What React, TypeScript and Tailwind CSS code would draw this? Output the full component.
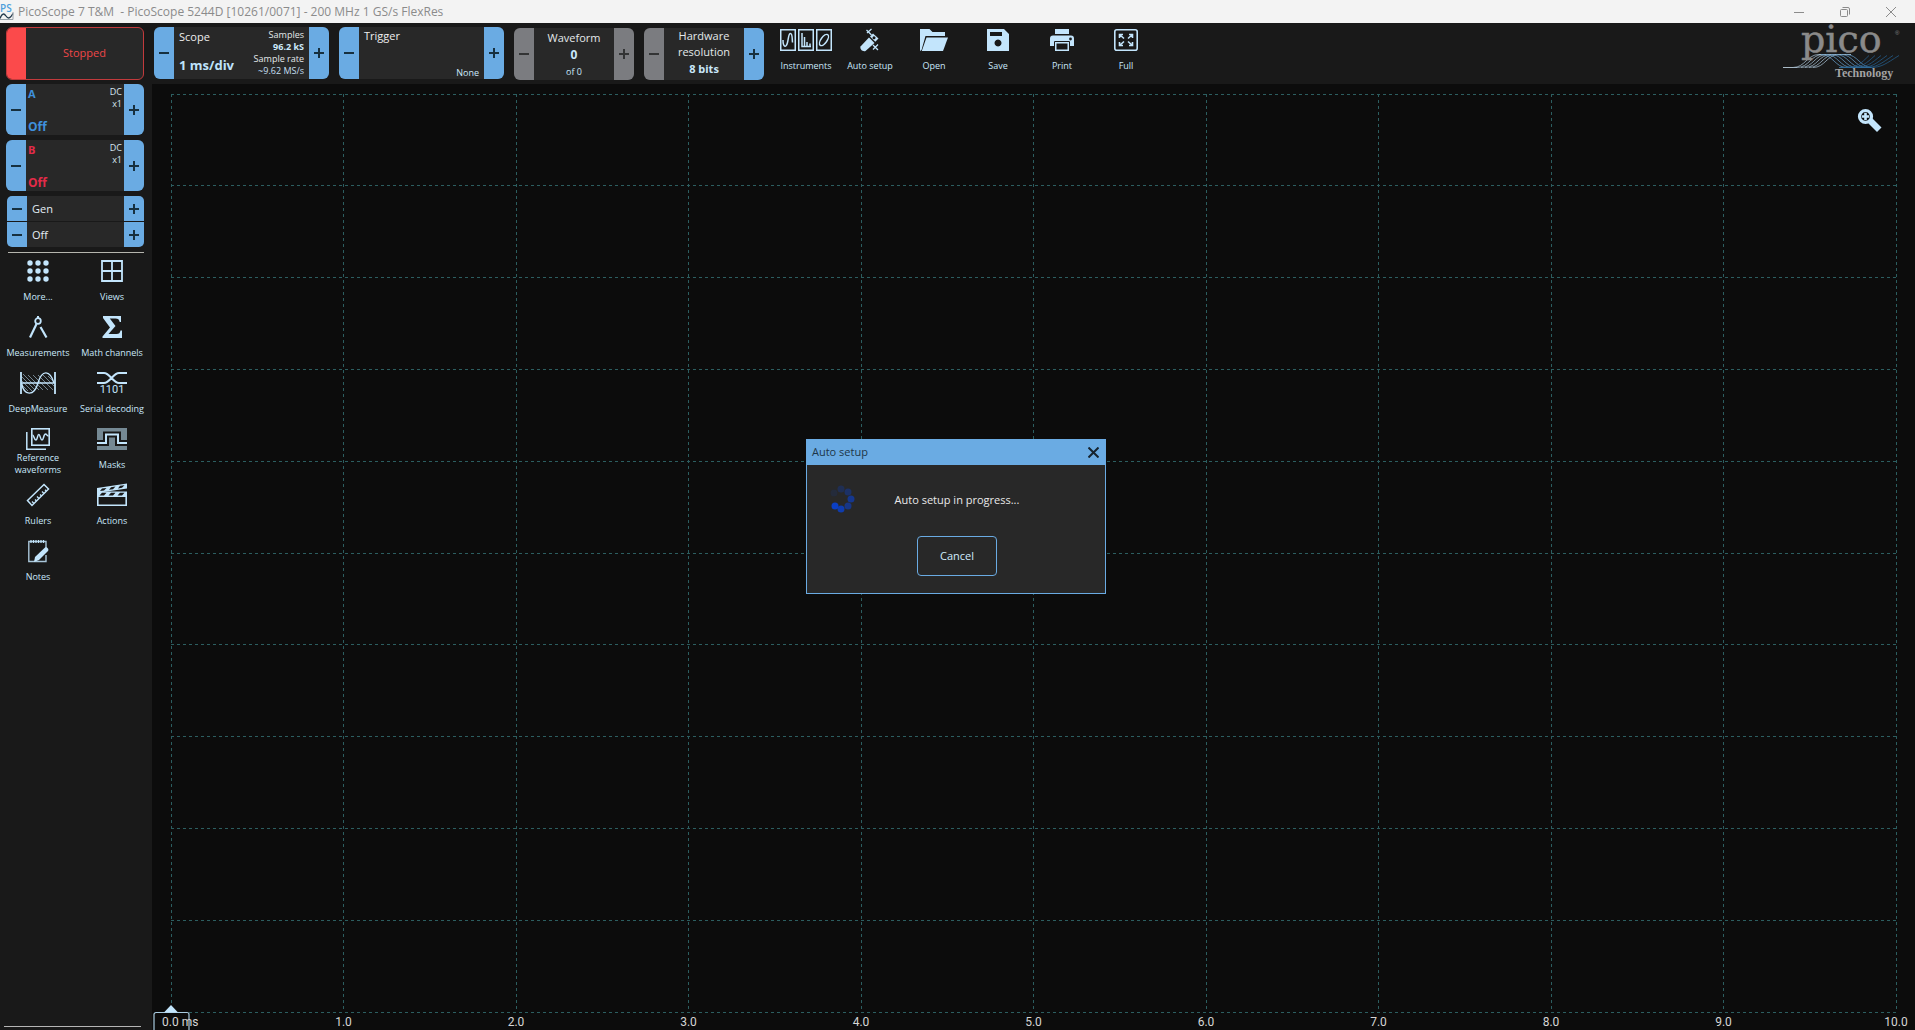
import React from "react";

type Tone = "blue" | "gray";
const ICON = "#c3e5fc";

function Minus() {
  return (
    <svg width="12" height="12" viewBox="0 0 12 12" aria-hidden="true">
      <path d="M1 6h10" stroke="currentColor" strokeWidth="2" />
    </svg>
  );
}

function Plus() {
  return (
    <svg width="12" height="12" viewBox="0 0 12 12" aria-hidden="true">
      <path d="M1 6h10M6 1v10" stroke="currentColor" strokeWidth="2" />
    </svg>
  );
}

function Step({ kind, label, tone = "blue" }: { kind: "minus" | "plus"; label: string; tone?: Tone }) {
  return (
    <button
      type="button"
      aria-label={label}
      className={
        "flex w-5 shrink-0 items-center justify-center self-stretch " +
        (tone === "blue" ? "bg-[#6aabe3] text-[#17303f]" : "bg-[#7b7c80] text-[#333435]")
      }
    >
      {kind === "minus" ? <Minus /> : <Plus />}
    </button>
  );
}

function Panel({
  name,
  className,
  minus = "blue",
  plus = "blue",
  children,
}: {
  name: string;
  className: string;
  minus?: Tone;
  plus?: Tone;
  children: React.ReactNode;
}) {
  return (
    <div className={"flex overflow-hidden rounded-md bg-[#282828] " + className}>
      <Step kind="minus" label={`${name} down`} tone={minus} />
      <button type="button" className="min-w-0 flex-1">
        {children}
      </button>
      <Step kind="plus" label={`${name} up`} tone={plus} />
    </div>
  );
}

/* ---------- icons ---------- */

function AppIcon() {
  return (
    <svg className="overflow-visible" width="14" height="18" viewBox="0 0 14 18" aria-hidden="true">
      <text x="0" y="9" fontSize="10" fontFamily="Open Sans, sans-serif" fontWeight="600" fill="#4d9fdc">PS</text>
      <path d="M0 15.500C2 10 4 10 6 13s4 3 7-2.500" fill="none" stroke="#22384a" strokeWidth="1.300" />
      <path d="M0 16.500h13V9" fill="none" stroke="#9aa3aa" strokeWidth="1" />
    </svg>
  );
}

function InstrumentsIcon() {
  return (
    <svg width="52" height="24" viewBox="0 0 52 24" fill="none" stroke={ICON} strokeWidth="1.500">
      <rect x=".75" y="1.750" width="14.500" height="20.500" />
      <rect x="18.750" y="1.750" width="14.500" height="20.500" />
      <rect x="36.750" y="1.750" width="14.500" height="20.500" />
      <path d="M3 12c0 7 3 8.500 4.500 2.500C8.800 9 8.500 5.500 10.500 5.500c2 0 1.500 4 2 9" />
      <path d="M22 5v13.500h9M24.500 18v-9M27 18v-4M30 18.500v-3" />
      <ellipse cx="44" cy="12" rx="3" ry="6.500" transform="rotate(35 44 12)" />
    </svg>
  );
}

function AutoSetupIcon() {
  return (
    <svg width="24" height="24" viewBox="0 0 24 24">
      <path d="M2.500 18.500 11 9.500l5.500 5.500-9 8c-2.500 1-6-1.500-5-4.500z" fill={ICON} />
      <path d="M12 8.500 15 5.500l5.500 5-3.200 3.300z" fill={ICON} />
      <circle cx="16" cy="9.700" r="1.500" fill="#191919" />
      <path d="M8.500 2l5 5M13.500 1l-4.500 4M15 17l5 5M20 16.500l-5 5" stroke={ICON} strokeWidth="1.300" />
    </svg>
  );
}

function OpenIcon() {
  return (
    <svg width="28" height="24" viewBox="0 0 28 24">
      <path d="M0 23V1h9.500l3 3H25v4H5.500L1.500 22z" fill={ICON} />
      <path d="M6.500 9.500H28L23 23H1.800z" fill={ICON} />
    </svg>
  );
}

function SaveIcon() {
  return (
    <svg width="24" height="24" viewBox="0 0 24 24">
      <path fillRule="evenodd" fill={ICON} d="M1 1h17l5 5v17H1zM4 4v4h12V4zM12 11.500a3.500 3.500 0 1 0 .01 0z" />
    </svg>
  );
}

function PrintIcon() {
  return (
    <svg width="26" height="24" viewBox="0 0 26 24">
      <path d="M6 1h14v5H6z" fill={ICON} />
      <path d="M4 7.500h18a3 3 0 0 1 3 3V18H1v-7.500a3 3 0 0 1 3-3z" fill={ICON} />
      <circle cx="21.500" cy="11" r="1.400" fill="#191919" />
      <rect x="6.750" y="14.750" width="12.500" height="7.500" fill="#191919" stroke={ICON} strokeWidth="1.500" />
      <path d="M5.500 13.500h15V18M5.500 13.500V18" fill="none" stroke="#191919" strokeWidth="1" />
    </svg>
  );
}

function FullIcon() {
  return (
    <svg width="24" height="24" viewBox="0 0 24 24" fill="none" stroke={ICON} strokeWidth="1.600">
      <rect x=".8" y="1.800" width="22.400" height="20.400" rx="2" />
      <path d="M5.500 10V6.500H9M5.500 6.500l4.500 4M15 6.500h3.500V10M18.500 6.500l-4.500 4M5.500 14v3.500H9M5.500 17.500l4.500-4M15 17.500h3.500V14M18.500 17.500l-4.500-4" />
    </svg>
  );
}

function MoreIcon() {
  return (
    <svg width="24" height="24" viewBox="0 0 24 24" fill={ICON}>
      {[4, 12, 20].map((y) => [4, 12, 20].map((x) => <circle key={`${x}-${y}`} cx={x} cy={y} r="2.700" />))}
    </svg>
  );
}

function ViewsIcon() {
  return (
    <svg width="24" height="24" viewBox="0 0 24 24" fill="none" stroke={ICON} strokeWidth="1.800">
      <path d="M2 2h20v20H2zM12 2v20M2 12h20" />
    </svg>
  );
}

function MeasurementsIcon() {
  return (
    <svg width="24" height="24" viewBox="0 0 24 24" fill="none" stroke={ICON}>
      <circle cx="12" cy="6" r="2.800" strokeWidth="1.800" />
      <path d="M12 3V1" strokeWidth="2" />
      <path d="M10.500 9 4 22.500" strokeWidth="2.200" />
      <path d="M14.500 12 20.500 22.500" strokeWidth="2.200" />
    </svg>
  );
}

function MathIcon() {
  return (
    <svg width="24" height="24" viewBox="0 0 24 24">
      <path d="M3 1h18v6h-1.300C19.300 4.500 18 3.500 15.500 3.500H9.800L15.500 11 8.500 19h8c2.500 0 3.500-1 4-3.500H22V23H2.500v-1.500L10 12.500 3 3z" fill={ICON} />
    </svg>
  );
}

function DeepMeasureIcon() {
  return (
    <svg width="36" height="24" viewBox="0 0 36 24" fill="none" stroke={ICON}>
      <path d="M1 5l14 14M1 9l11 11M1 13l7 7M3 3l16 16M8 4l15 15M13 4l15 15M18 4l15 15M23 4l11 11M28 5l6 6" strokeWidth=".9" opacity=".6" />
      <path d="M1 12h34" strokeWidth="1.400" />
      <path d="M1.500 12C4 25 14 26 18 12S30-1 34 12" strokeWidth="1.400" />
      <path d="M1 1v22M35 1v22" strokeWidth="1.800" />
    </svg>
  );
}

function SerialIcon() {
  return (
    <svg className="overflow-visible" width="30" height="24" viewBox="0 0 30 24" fill="none">
      <path d="M0 2h7c6 0 9 10 15 10h8M0 12h7c6 0 9-10 15-10h8" stroke={ICON} strokeWidth="2" />
      <text x="15" y="22" textAnchor="middle" fontSize="11" fontFamily="Roboto, sans-serif" fill={ICON}>1101</text>
    </svg>
  );
}

function ReferenceIcon() {
  return (
    <svg width="24" height="24" viewBox="0 0 24 24" fill="none" stroke={ICON}>
      <rect x="5.800" y="1.800" width="17.400" height="16.400" strokeWidth="1.600" />
      <path d="M.8 5v17.200H20" strokeWidth="1.500" />
      <path d="M6.500 8C8 8 8 13 9.800 13s1.500-5.500 3-5.500 1.500 5.500 3.200 5.500 1.500-6 3.500-6c1.500 0 1 2 3 2" strokeWidth="1.500" />
    </svg>
  );
}

function MasksIcon() {
  return (
    <svg width="30" height="24" viewBox="0 0 30 24" fill="none">
      <path d="M0 1h30v22H0z" fill="#758994" />
      <path d="M0 16h9V7.500h12V16h9" stroke="#191919" strokeWidth="6" />
      <path d="M0 16h9V7.500h12V16h9" stroke={ICON} strokeWidth="2" />
    </svg>
  );
}

function RulersIcon() {
  return (
    <svg width="24" height="24" viewBox="0 0 24 24" fill="none" stroke={ICON} strokeWidth="1.500">
      <path d="M1.500 17.500 18 1.500 22.500 6 6 22.500z" />
      <path d="M8 20.500l-2-2M10.500 18 9 16.500M13 15.500l-2-2M15.500 13 14 11.500M18 10.500l-2-2M20.300 8 19 6.700" strokeWidth="1.300" />
    </svg>
  );
}

function ActionsIcon() {
  return (
    <svg width="30" height="24" viewBox="0 0 30 24">
      <path d="M0 5 30 .5v5L0 10z" fill={ICON} />
      <path d="M5 5.500l4.500-.6-2.500 2.600-4 .6zM14 4.200l4.500-.6-2.500 2.600-4 .6zM23 2.800l4.500-.6L25 4.800l-4 .6z" fill="#191919" />
      <path d="M0 8.500h30V14H0z" fill={ICON} />
      <path d="M5 9.800h4.500L7 12.500H2.500zM14 9.800h4.500L16 12.500h-4.500zM23 9.800h4.500L25 12.500h-4.500z" fill="#191919" />
      <path d="M.8 13v9.200h28.400V13" fill="none" stroke={ICON} strokeWidth="1.600" />
    </svg>
  );
}

function NotesIcon() {
  return (
    <svg width="24" height="24" viewBox="0 0 24 24" fill="none">
      <path d="M20 10V2.500H2.800v20H20V16" stroke="#a9c6d9" strokeWidth="1.400" />
      <path d="M5 1v3M7.500 1v3M10 1v3M12.500 1v3M15 1v3M17.500 1v3" stroke={ICON} strokeWidth="1.200" />
      <path d="M8 23l1-5L19 8.500c1.500-1 4.500 1.500 3 3.500L13 21z" fill={ICON} />
    </svg>
  );
}

function PicoLogo() {
  const waves = [0, 1, 2, 3, 4, 5];
  return (
    <svg className="overflow-visible" width="120" height="54" viewBox="0 0 120 54" role="img" aria-label="pico Technology">
      <g fill="none" strokeWidth="1">
        <path d="M0 40.500h14M36 27.500h32" stroke="#a9bac6" />
        {waves.map((i) => (
          <path key={`r${i}`} d={`M${10 + i * 4} 40.500c12 0 14-13 26-13`} stroke="#9db4c6" opacity=".8" />
        ))}
        {waves.map((i) => (
          <path key={`f${i}`} d={`M${38 + i * 5} 27.500c12 0 14 13 26 13`} stroke="#5f93bd" opacity=".8" />
        ))}
        {waves.map((i) => (
          <path key={`b${i}`} d={`M${62 + i * 5} 40.500c12 0 16-4 ${24 + i}-12`} stroke="#245a86" opacity=".8" />
        ))}
        <path d="M56 40.500h32" stroke="#2d6a99" />
      </g>
      <text x="18" y="25" fontSize="38" fontFamily="DejaVu Serif, serif" fill="#8a8a8a" stroke="#8a8a8a" strokeWidth=".5">
        pico
      </text>
      <text x="112" y="8" fontSize="6" fontFamily="Liberation Sans, sans-serif" fill="#858585">®</text>
      <text x="52" y="50" fontSize="12" fontWeight="700" fontFamily="Liberation Serif, serif" fill="#a3a3a3">Technology</text>
    </svg>
  );
}

/* ---------- data ---------- */

const toolbar = [
  { label: "Instruments", icon: <InstrumentsIcon /> },
  { label: "Auto setup", icon: <AutoSetupIcon /> },
  { label: "Open", icon: <OpenIcon /> },
  { label: "Save", icon: <SaveIcon /> },
  { label: "Print", icon: <PrintIcon /> },
  { label: "Full", icon: <FullIcon /> },
];

const tools = [
  { label: "More...", icon: <MoreIcon /> },
  { label: "Views", icon: <ViewsIcon /> },
  { label: "Measurements", icon: <MeasurementsIcon /> },
  { label: "Math channels", icon: <MathIcon /> },
  { label: "DeepMeasure", icon: <DeepMeasureIcon /> },
  { label: "Serial decoding", icon: <SerialIcon /> },
  { label: "Reference waveforms", icon: <ReferenceIcon /> },
  { label: "Masks", icon: <MasksIcon /> },
  { label: "Rulers", icon: <RulersIcon /> },
  { label: "Actions", icon: <ActionsIcon /> },
  { label: "Notes", icon: <NotesIcon /> },
];

const ticks = ["0.0 ms", "1.0", "2.0", "3.0", "4.0", "5.0", "6.0", "7.0", "8.0", "9.0", "10.0"];

/* ---------- sections ---------- */

function TitleBar() {
  return (
    <div className="flex h-[23px] shrink-0 items-center bg-[#f3f3f3] pr-px text-[#8b8b8b]">
      <AppIcon />
      <h1 className="ml-1 flex-1 text-xs whitespace-pre">
        {"PicoScope 7 T&M  - PicoScope 5244D [10261/0071] - 200 MHz 1 GS/s FlexRes"}
      </h1>
      <button type="button" aria-label="Minimize" className="flex w-[46px] justify-center">
        <svg width="10" height="10" viewBox="0 0 10 10" stroke="currentColor"><path d="M0 5.500h10" /></svg>
      </button>
      <button type="button" aria-label="Restore" className="flex w-[46px] justify-center">
        <svg width="10" height="10" viewBox="0 0 10 10" fill="none" stroke="currentColor">
          <rect x=".5" y="2.500" width="7" height="7" rx="1" />
          <path d="M2.500.5H8A1.500 1.500 0 0 1 9.500 2v5.500" />
        </svg>
      </button>
      <button type="button" aria-label="Close" className="flex w-[46px] justify-center">
        <svg width="10" height="10" viewBox="0 0 10 10" stroke="currentColor"><path d="M0 0l10 10M10 0L0 10" /></svg>
      </button>
    </div>
  );
}

function Toolbar() {
  return (
    <header className="flex h-[61px] shrink-0 items-start pt-1">
      <div className="w-[154px] shrink-0 pl-1.5">
        <button
          type="button"
          className="flex h-[53px] w-[138px] items-stretch overflow-hidden rounded-md border border-[#c23a3c] bg-[#282828] text-[11px] text-[#ee4749]"
        >
          <span className="w-[19px] bg-[#fb4a4b]" />
          <span className="flex flex-1 items-center justify-center">Stopped</span>
        </button>
      </div>
      <div className="flex gap-2.5">
        <Panel name="Scope" className="h-[52px] w-[175px]">
          <div className="flex h-full justify-between px-[5px]">
            <div className="flex flex-col justify-between pt-0.5 pb-1 text-left">
              <span className="text-[11px] leading-4 text-[#eeeeee]">Scope</span>
              <span className="text-[13px] leading-5 font-bold whitespace-nowrap text-[#bfe3fb]">1 ms/div</span>
            </div>
            <div className="pt-0.5 text-right text-[9px] leading-3 text-[#e4e8ea]">
              <p>Samples</p>
              <p className="font-bold text-[#cdeafc]">96.2 kS</p>
              <p>Sample rate</p>
              <p className="text-[#c4dff0]">~9.62 MS/s</p>
            </div>
          </div>
        </Panel>
        <Panel name="Trigger" className="h-[52px] w-[165px]">
          <div className="flex h-full flex-col justify-between px-[5px] pt-px">
            <span className="text-left text-[11px] leading-4 text-[#eeeeee]">Trigger</span>
            <span className="text-right text-[9px] leading-3 text-[#cdeafc]">None</span>
          </div>
        </Panel>
        <Panel name="Waveform" className="mt-px h-[52px] w-[120px]" minus="gray" plus="gray">
          <div className="flex h-full flex-col items-center pt-0.5 text-[#c9e7fa]">
            <span className="text-[11px] leading-4 text-[#e4e8ea]">Waveform</span>
            <span className="text-xs leading-[18px] font-bold">0</span>
            <span className="text-[9px] leading-4">of 0</span>
          </div>
        </Panel>
        <Panel name="Hardware resolution" className="mt-px h-[52px] w-[120px]" minus="gray">
          <div className="flex h-full flex-col items-center text-[11px] leading-4 text-[#e4e8ea]">
            <span>Hardware</span>
            <span>resolution</span>
            <span className="leading-[18px] font-bold text-[#c9e7fa]">8 bits</span>
          </div>
        </Panel>
      </div>
      <nav className="ml-2.5 flex">
        {toolbar.map((t) => (
          <button key={t.label} type="button" className="flex w-16 flex-col items-center pt-px text-[9px] leading-4 text-[#c9e7fa]">
            {t.icon}
            <span className="pt-1.5 whitespace-nowrap">{t.label}</span>
          </button>
        ))}
      </nav>
      <div className="mr-3 ml-auto">
        <PicoLogo />
      </div>
    </header>
  );
}

function Channel({ name, className }: { name: string; className: string }) {
  return (
    <Panel name={`Channel ${name}`} className="h-[51px] w-[138px]">
      <div className="flex h-full justify-between px-0.5">
        <div className={"flex flex-col justify-between pt-0.5 text-left font-bold " + className}>
          <span className="text-[11px] leading-4">{name}</span>
          <span className="text-xs leading-4">Off</span>
        </div>
        <div className="pt-0.5 text-right text-[9px] leading-3 text-[#d5e6f0]">
          <p>DC</p>
          <p>x1</p>
        </div>
      </div>
    </Panel>
  );
}

function Sidebar() {
  return (
    <aside className="flex w-[152px] shrink-0 flex-col">
      <div className="flex flex-col gap-[5px] pl-1.5">
        <Channel name="A" className="text-[#3f90dc]" />
        <Channel name="B" className="text-[#e32b49]" />
        <div className="ml-px flex h-[51px] w-[137px] flex-col gap-px overflow-hidden rounded-[5px]">
          {["Gen", "Off"].map((g) => (
            <div key={g} className="flex flex-1 bg-[#282828]">
              <Step kind="minus" label={`Generator ${g} down`} />
              <button type="button" className="flex-1 pl-[5px] text-left text-[11px] leading-4 text-[#e4eef5]">
                {g}
              </button>
              <Step kind="plus" label={`Generator ${g} up`} />
            </div>
          ))}
        </div>
      </div>
      <hr className="mt-[5px] mr-2 ml-2 border-[#b5b5ae]" />
      <nav className="grid grid-cols-2 pr-[3px] pl-px">
        {tools.map((t) => (
          <button
            key={t.label}
            type="button"
            className="flex h-14 flex-col items-center pt-1.5 text-[9px] leading-3 text-[#c9e7fa]"
          >
            {t.icon}
            <span
              className={
                t.label === "Reference waveforms" ? "w-16 pt-px" : "pt-2 whitespace-nowrap"
              }
            >
              {t.label}
            </span>
          </button>
        ))}
      </nav>
      <hr className="mt-auto mr-[11px] mb-[3px] ml-1 border-[#b5b5b5]" />
    </aside>
  );
}

function Graph() {
  const steps = Array.from({ length: 11 }, (_, i) => i);
  return (
    <main className="relative flex min-w-0 flex-1 flex-col bg-[#0c0c0c] px-[19px] pt-2.5">
      <svg className="min-h-0 w-full flex-1 overflow-visible" aria-label="Scope grid" shapeRendering="crispEdges">
        <g stroke="#2c5e60" strokeDasharray="3 3">
          {steps.map((i) => (
            <line key={`v${i}`} x1={`${i * 10}%`} x2={`${i * 10}%`} y1="0" y2="100%" />
          ))}
          {steps.map((i) => (
            <line key={`h${i}`} y1={`${i * 10}%`} y2={`${i * 10}%`} x1="0" x2="100%" />
          ))}
        </g>
      </svg>
      <div className="flex h-[18px] shrink-0 justify-between font-[Roboto,sans-serif] text-xs leading-5 text-[#d6d6d6]">
        {ticks.map((t, i) =>
          i === 0 ? (
            <span key={t} className="relative flex w-0">
              <svg className="absolute -top-[7px] -left-[18px]" width="37" height="25" viewBox="0 0 37 25" aria-hidden="true">
                <path d="M1 25V9.500a2 2 0 0 1 2-2H34a2 2 0 0 1 2 2V25" fill="#0c0c0c" stroke="#a9cbe0" strokeWidth="1.200" />
                <path d="M11 7.500 18 0l7 7.500z" fill={ICON} />
              </svg>
              <span className="relative -ml-[9px] whitespace-nowrap">{t}</span>
            </span>
          ) : (
            <span key={t} className="flex w-0 justify-center">
              {t}
            </span>
          ),
        )}
      </div>
      <button type="button" aria-label="Zoom" className="absolute top-6 right-8">
        <svg width="26" height="26" viewBox="0 0 26 26">
          <path d="M12 12.500 15 10l9.500 9.500-4.500 4.500L11.500 15.500z" fill={ICON} />
          <circle cx="8.500" cy="8.500" r="6" fill="#0c0c0c" stroke={ICON} strokeWidth="3.200" />
          <path d="M8.500 4.800v7.400M4.800 8.500h7.400" stroke={ICON} strokeWidth="2.600" />
        </svg>
      </button>
    </main>
  );
}

function AutoSetupDialog() {
  const dots = [
    [17, 5, 0.28],
    [24, 8, 0.4],
    [27, 15, 0.65],
    [24, 22, 0.6],
    [17, 25, 0.85],
    [11, 22, 1],
    [10, 9, 0.12],
  ];
  return (
    <div className="fixed inset-0 flex items-center justify-center pt-[3px] pr-[3px]">
      <div role="dialog" aria-label="Auto setup" className="w-[300px] border border-[#6aabe3] bg-[#282828]">
        <div className="flex h-[25px] items-center justify-between bg-[#6aabe3] pr-1.5 pl-[5px] text-[#1d3648]">
          <h2 className="text-[11px]">Auto setup</h2>
          <button type="button" aria-label="Close dialog">
            <svg width="11" height="11" viewBox="0 0 11 11" stroke="#16242f" strokeWidth="2"><path d="M.5.5l10 10M10.500.5l-10 10" /></svg>
          </button>
        </div>
        <div className="grid h-[71px] grid-cols-[68px_1fr_66px] items-center justify-items-center">
          <svg className="mb-1" width="34" height="30" viewBox="0 0 34 30" aria-hidden="true">
            {dots.map(([x, y, o]) => (
              <circle key={`${x}-${y}`} cx={x} cy={y} r="3.500" fill="#0b3fc4" opacity={o} />
            ))}
          </svg>
          <p className="text-[11px] whitespace-nowrap text-[#e8e8e8]">Auto setup in progress...</p>
        </div>
        <div className="flex justify-center pb-[17px] pl-0.5">
          <button type="button" className="h-10 w-20 rounded border border-[#6aabe3] text-[11px] text-[#d0ebfc]">
            Cancel
          </button>
        </div>
      </div>
    </div>
  );
}

export default function App() {
  return (
    <div className="flex h-screen flex-col overflow-hidden bg-[#191919] font-['Open_Sans','Noto_Sans',sans-serif]">
      <TitleBar />
      <Toolbar />
      <div className="flex min-h-0 flex-1">
        <Sidebar />
        <Graph />
      </div>
      <AutoSetupDialog />
    </div>
  );
}
